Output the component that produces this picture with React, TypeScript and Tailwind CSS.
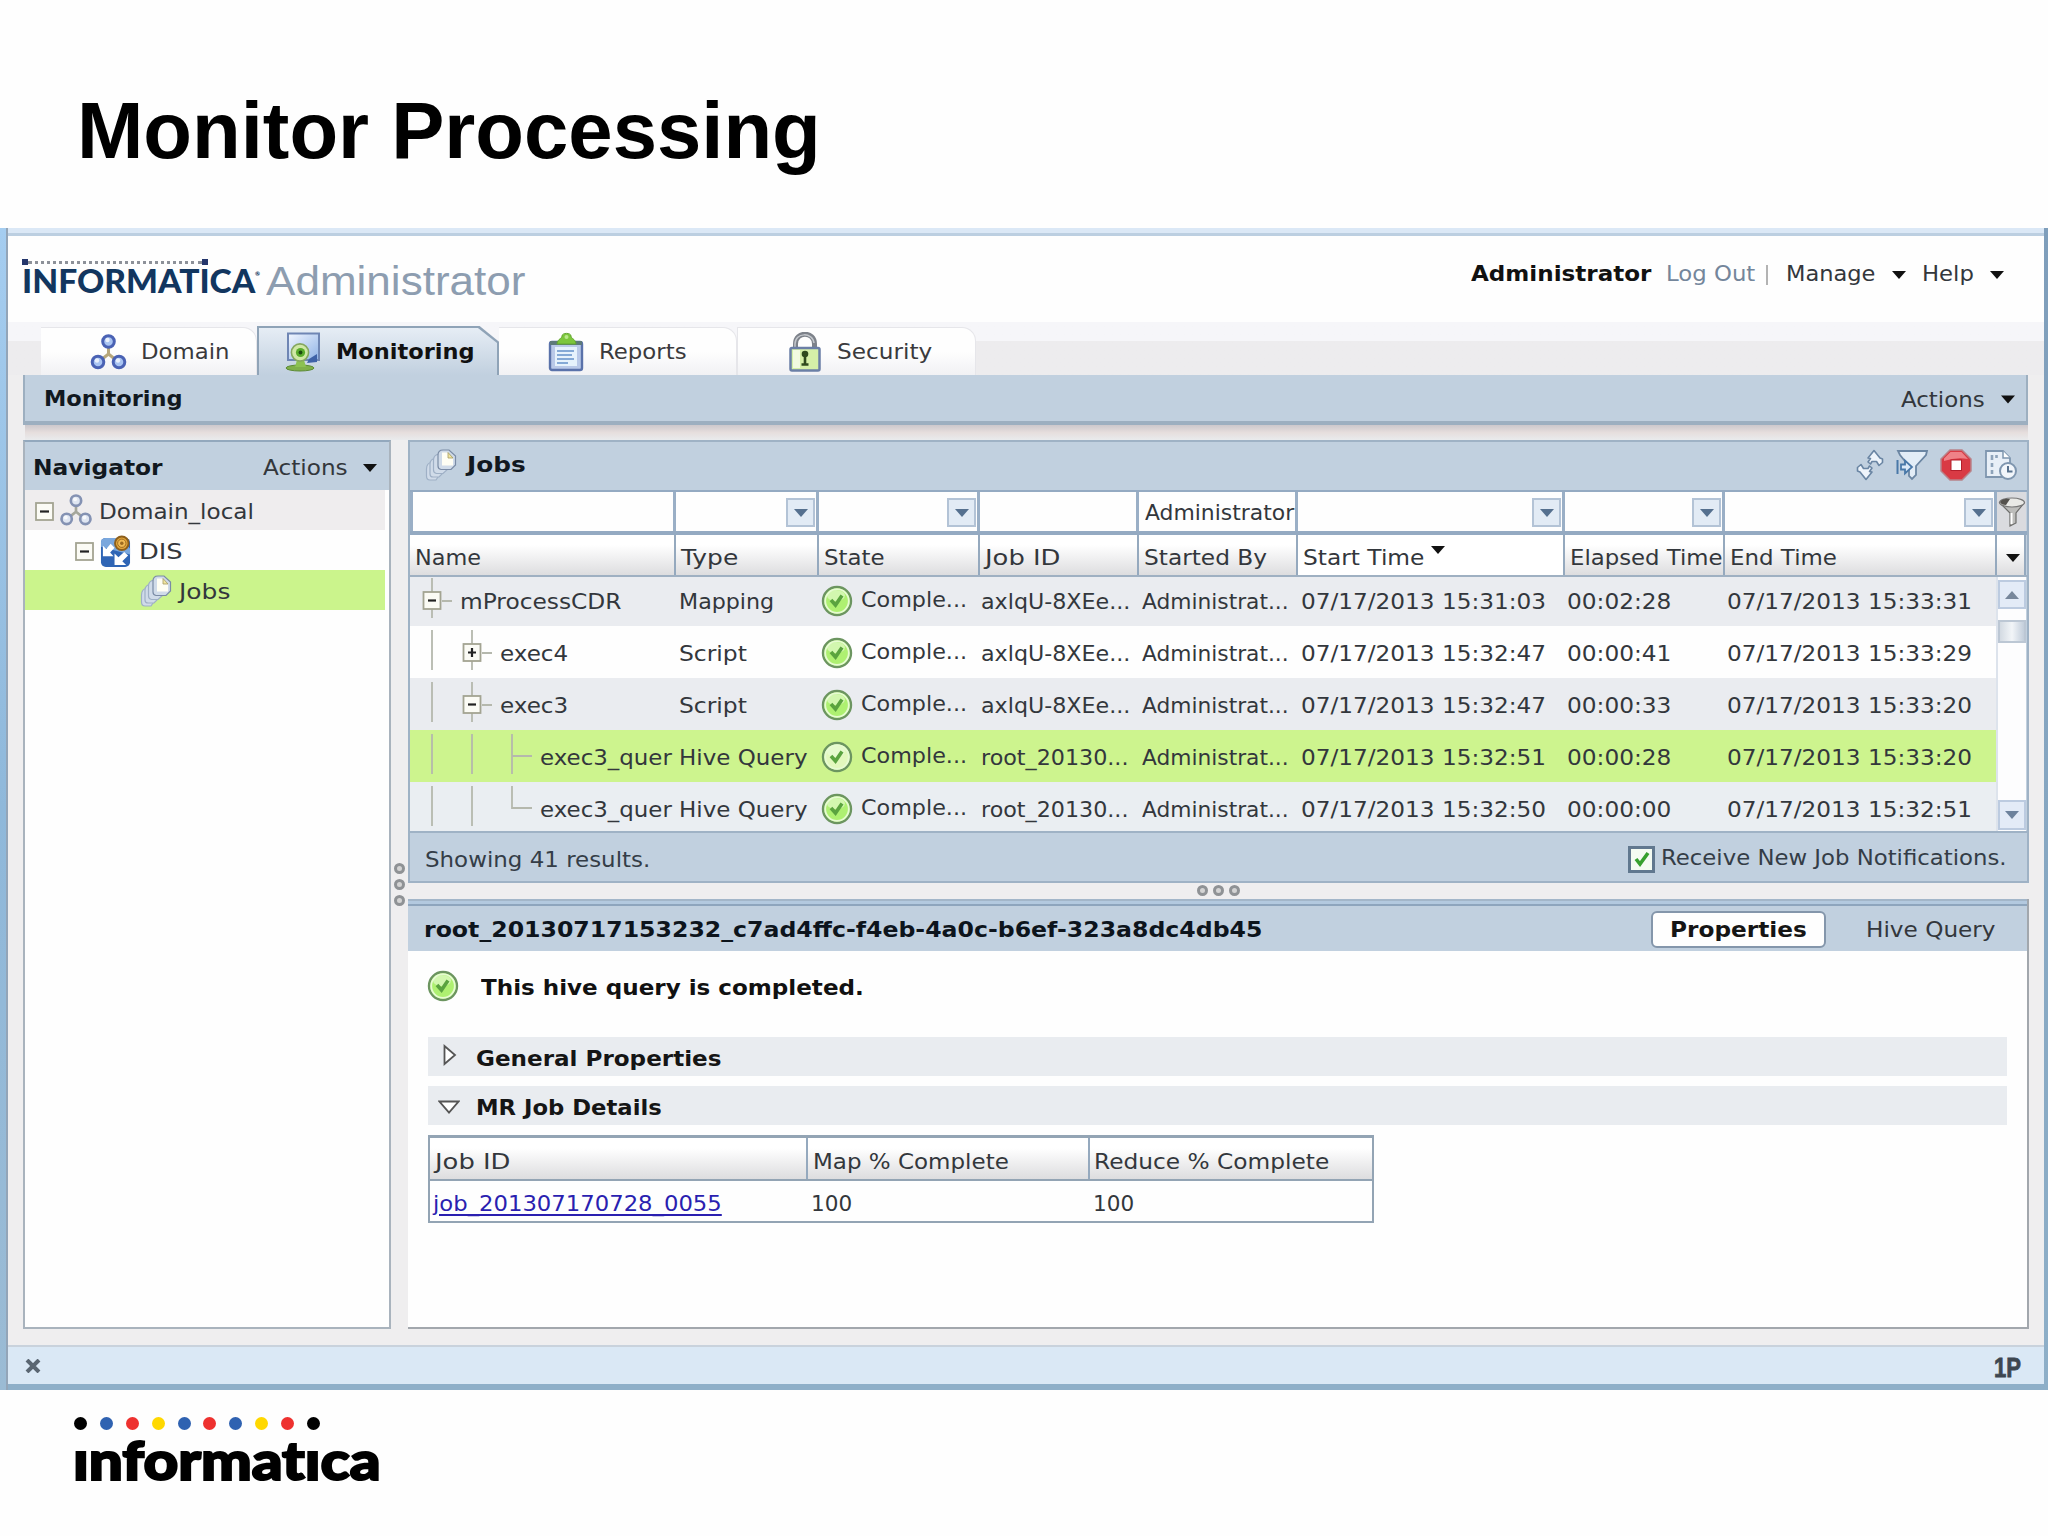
import React, { useLayoutEffect, useRef } from "react";

/** Text that is stretched horizontally to fill the width of its box. */
function Fit({ className = "", children }: { className?: string; children: React.ReactNode }) {
  const outer = useRef<HTMLSpanElement>(null);
  const inner = useRef<HTMLSpanElement>(null);
  useLayoutEffect(() => {
    const o = outer.current!;
    const i = inner.current!;
    const apply = () => {
      const natural = i.offsetWidth;
      if (natural > 0) i.style.transform = `scaleX(${(o.clientWidth - 1) / natural})`;
    };
    apply();
    const ro = new ResizeObserver(apply);
    ro.observe(o);
    ro.observe(i);
    return () => ro.disconnect();
  }, []);
  return (
    <span ref={outer} className={`flex shrink-0 whitespace-pre ${className}`}>
      <span ref={inner} className="inline-block shrink-0 origin-left">
        {children}
      </span>
    </span>
  );
}

function Down({ className = "", fill = "#111" }: { className?: string; fill?: string }) {
  return (
    <svg viewBox="0 0 14 8" className={`h-[8px] w-[14px] shrink-0 ${className}`}>
      <path d="M0 0H14L7 8Z" fill={fill} />
    </svg>
  );
}

function DomainIcon({ className = "", muted = false }: { className?: string; muted?: boolean }) {
  const s = muted ? "#8492b3" : "#4a62b4";
  const f = muted ? "#dfe6f2" : "#a9c4f2";
  return (
    <svg viewBox="0 0 36 36" className={`shrink-0 ${className}`}>
      <path d="M18 10V21M18 20L8 28M18 20L28 28" stroke={muted ? "#a5a79b" : "#b7a77c"} strokeWidth="3" fill="none" />
      {[[18, 7.5], [7.5, 28], [28.5, 28]].map(([x, y]) => (
        <g key={`${x}-${y}`}>
          <circle cx={x} cy={y} r="5.8" fill={f} stroke={s} strokeWidth="3" />
          <circle cx={x - 1} cy={y - 1.5} r="2.2" fill="#fff" opacity=".75" />
        </g>
      ))}
    </svg>
  );
}

function MonitorIcon() {
  return (
    <svg viewBox="0 0 36 40" className="h-[40px] w-[36px] shrink-0">
      <defs>
        <linearGradient id="scr" x1="0" y1="0" x2="1" y2="1">
          <stop offset="0" stopColor="#f2f7ff" />
          <stop offset="1" stopColor="#8fb2e6" />
        </linearGradient>
      </defs>
      <path d="M3 1.500H34V28H3Z" fill="url(#scr)" stroke="#6f86b4" strokeWidth="2" />
      <path d="M24 27L32 22V30L22 31Z" fill="#3f62a8" />
      <ellipse cx="15" cy="36" rx="14" ry="3" fill="#7fb04a" stroke="#5c8a35" />
      <path d="M12 28H19L21 35H10Z" fill="#8cc152" />
      <circle cx="15" cy="20.5" r="8.6" fill="#cfe8a6" stroke="#86a860" strokeWidth="1.6" />
      <circle cx="15.5" cy="20.5" r="4.6" fill="#58ab2c" />
      <circle cx="15.5" cy="20.5" r="1.9" fill="#1d4a12" />
    </svg>
  );
}

function ReportsIcon() {
  return (
    <svg viewBox="0 0 36 40" className="h-[40px] w-[36px] shrink-0">
      <rect x="2" y="10" width="32" height="28" rx="2" fill="#b9c9e8" stroke="#5a72aa" strokeWidth="2.400" />
      <rect x="2" y="9" width="32" height="4" fill="#5d7a7a" />
      <rect x="7" y="15" width="22" height="19" fill="#e6f2fc" />
      <path d="M9 19H26M9 23H24M9 27H26M9 31H20" stroke="#84a9d6" strokeWidth="2" />
      <path d="M9 12C10 6 14 7 14 4C14 .5 23 .5 23 4C23 7 27 6 28 12Z" fill="#7cc63c" stroke="#63a62f" />
      <circle cx="18.500" cy="5" r="2" fill="#b9e88a" />
    </svg>
  );
}

function LockIcon() {
  return (
    <svg viewBox="0 0 34 40" className="h-[40px] w-[34px] shrink-0">
      <path d="M7.500 18V12C7.500 -1 26.500 -1 26.500 12V18" fill="none" stroke="#7d828a" strokeWidth="5" />
      <path d="M7 17V12C7 0 25 0 26 11" fill="none" stroke="#c3c7cc" strokeWidth="1.500" />
      <rect x="2.500" y="16" width="29" height="22.500" rx="1.500" fill="#d5f0a8" stroke="#6b7fa6" strokeWidth="2.500" />
      <path d="M5 18H12V36H5Z" fill="#f2fbe0" />
      <circle cx="17" cy="22" r="3.300" fill="#2f4a1d" />
      <path d="M17 22V32M13.500 32.500H20.500" stroke="#2f4a1d" strokeWidth="2.600" />
    </svg>
  );
}

function PagesIcon({ className = "" }: { className?: string }) {
  return (
    <svg viewBox="0 0 32 32" className={`h-[32px] w-[32px] shrink-0 ${className}`}>
      <g fill="#d0dbe9" stroke="#9fb0c6" strokeWidth="1.200">
        <path d="M1.500 20Q1.500 14 7 13H15V25L11 31H5Q1.500 31 1.500 27Z" />
        <path d="M5 15Q5 10 11 9H19V23L14 28H8Q5 28 5 25Z" />
        <path d="M8.500 11Q8.500 6 14 5H23V20L18 24.500H11.500Q8.500 24 8.500 21Z" />
        <path d="M13 6Q13 1 18 1H24L30.500 7V16L26 20.500H16Q13 20 13 17Z" stroke="#7a8ba5" />
      </g>
      <path d="M17 3.500H23V9H28V16.500H17Z" fill="#fffef4" />
      <path d="M23 3.500L28 9H23Z" fill="#f3e6a0" stroke="#a39a62" strokeWidth=".8" />
    </svg>
  );
}

function ServiceIcon() {
  return (
    <svg viewBox="0 0 32 34" className="h-[33px] w-[31px] shrink-0">
      <rect x="1" y="3" width="30" height="30" rx="5" fill="#2f65b5" />
      <path d="M1 12V8Q1 3 6 3H20L31 14V20Z" fill="#7aa7dd" />
      <path d="M3 22V11L6.500 14.500L11 9L15 13L10.500 18L14 22Z" fill="#fff" />
      <path d="M15 31V19L19 23L25 17.500L29 21L23 27L27 31Z" fill="#fff" />
      <circle cx="22.500" cy="8.500" r="7" fill="#e3a63a" stroke="#8d5f1c" strokeWidth="2" />
      <circle cx="22.500" cy="8.500" r="4.300" fill="#efb954" stroke="#9c6a20" strokeWidth="1" />
      <circle cx="22.500" cy="8.500" r="1.800" fill="#9c6a20" />
    </svg>
  );
}

function CheckIcon({ pale = false, className = "" }: { pale?: boolean; className?: string }) {
  return (
    <svg viewBox="0 0 32 32" className={`h-[32px] w-[32px] shrink-0 ${className}`}>
      <circle cx="16" cy="16" r="14" fill={pale ? "#e2f8bd" : "#aef071"} stroke="#6c9560" strokeWidth="2.400" />
      <circle cx="16" cy="16" r="11.800" fill="none" stroke="#e6fbd2" strokeWidth="1.800" />
      <ellipse cx="15" cy="10.500" rx="9" ry="5.500" fill="#e9fcd8" opacity=".6" />
      <path d="M10 15L14.500 20L21 10.500" fill="none" stroke="#5aa33f" strokeWidth="3.600" />
    </svg>
  );
}

function TreeBox() {
  return (
    <svg viewBox="0 0 19 19" className="h-[19px] w-[19px] shrink-0">
      <rect x="1" y="1" width="17" height="17" fill="#fbfbf5" stroke="#a3a492" strokeWidth="1.800" />
      <path d="M5 9.500H14" stroke="#222" strokeWidth="2.200" />
    </svg>
  );
}

type Branch = "line" | "minus" | "plus" | "tee" | "end";
function Tree({ kind }: { kind: Branch }) {
  const d = {
    line: "M20 2V42",
    minus: "M20 2V42M30 25H40",
    plus: "M20 2V42M30 25H40",
    tee: "M20 2V42M20 24H40",
    end: "M20 2V24H40",
  }[kind];
  return (
    <svg viewBox="0 0 40 52" className="h-[52px] w-[40px] shrink-0">
      <path d={d} fill="none" stroke="#b5b8ad" strokeWidth="1.800" />
      {(kind === "minus" || kind === "plus") && (
        <g>
          <rect x="11.500" y="16" width="17" height="17" fill="#fbfbf5" stroke="#a3a492" strokeWidth="1.800" />
          <path d={kind === "plus" ? "M16 24.500H24M20 20V29" : "M16 24.500H24"} stroke="#222" strokeWidth="2.200" />
        </g>
      )}
    </svg>
  );
}

const COLS = "grid grid-cols-[266px_143px_161px_159px_159px_267px_160px_272px_29px]";

function FilterCell({ drop = false, className = "", children }: { drop?: boolean; className?: string; children?: React.ReactNode }) {
  return (
    <div className={`flex items-center border-r-[3px] border-[#9aafc6] bg-[#fefefe] pt-[2px] ${className}`}>
      {children}
      {drop && (
        <div className="mr-px ml-auto flex h-[29px] w-[29px] shrink-0 items-center justify-center border-2 border-[#b3c3d6] bg-[#e2ebf5]">
          <Down className="h-[7px] w-[12px]" fill="#55708f" />
        </div>
      )}
    </div>
  );
}

function HeadCell({ className = "", children }: { className?: string; children?: React.ReactNode }) {
  return (
    <div className={`flex items-center border-r-2 border-[#95a9be] bg-linear-to-b from-white from-25% to-[#dddddf] pt-[6px] pl-[5px] ${className}`}>
      {children}
    </div>
  );
}

type Row = {
  bg: string;
  tree: Branch[];
  name: string;
  nameW: string;
  type: string;
  typeW: string;
  id: string;
  idW: string;
  start: string;
  elapsed: string;
  end: string;
  selected?: boolean;
};

const rows: Row[] = [
  { bg: "bg-[#eaecf0] h-[49px]", tree: ["minus"], name: "mProcessCDR", nameW: "w-[163px]", type: "Mapping", typeW: "w-[96px]", id: "axlqU-8XEe...", idW: "w-[150px]", start: "07/17/2013 15:31:03", elapsed: "00:02:28", end: "07/17/2013 15:33:31" },
  { bg: "bg-[#fefefe] h-[52px] pt-[3px]", tree: ["line", "plus"], name: "exec4", nameW: "w-[69px]", type: "Script", typeW: "w-[69px]", id: "axlqU-8XEe...", idW: "w-[150px]", start: "07/17/2013 15:32:47", elapsed: "00:00:41", end: "07/17/2013 15:33:29" },
  { bg: "bg-[#eaecf0] h-[52px] pt-[3px]", tree: ["line", "minus"], name: "exec3", nameW: "w-[69px]", type: "Script", typeW: "w-[69px]", id: "axlqU-8XEe...", idW: "w-[150px]", start: "07/17/2013 15:32:47", elapsed: "00:00:33", end: "07/17/2013 15:33:20" },
  { bg: "bg-[#cdf48e] h-[52px] pt-[3px]", tree: ["line", "line", "tee"], name: "exec3_quer", nameW: "w-[133px]", type: "Hive Query", typeW: "w-[129px]", id: "root_20130...", idW: "w-[148px]", start: "07/17/2013 15:32:51", elapsed: "00:00:28", end: "07/17/2013 15:33:20", selected: true },
  { bg: "bg-[#eaeef2] h-[49px] pt-[3px]", tree: ["line", "line", "end"], name: "exec3_quer", nameW: "w-[133px]", type: "Hive Query", typeW: "w-[129px]", id: "root_20130...", idW: "w-[148px]", start: "07/17/2013 15:32:50", elapsed: "00:00:00", end: "07/17/2013 15:32:51" },
];

function Knobs({ vertical = false }: { vertical?: boolean }) {
  return (
    <div className={`flex items-center gap-[5px] ${vertical ? "flex-col" : ""}`}>
      {[0, 1, 2].map((i) => (
        <span key={i} className="h-[11px] w-[11px] rounded-full border-[3px] border-[#8f9295] bg-[#d4d4d4]" />
      ))}
    </div>
  );
}

function Tab({ className, children }: { className: string; children: React.ReactNode }) {
  return (
    <div className={`flex h-[48px] items-center rounded-tr-[14px] border-t border-r border-[#e6e6ea] bg-linear-to-b from-[#fefefe] from-50% to-[#f1f1f4] text-[#3a3a3d] ${className}`}>
      {children}
    </div>
  );
}

function Navigator() {
  return (
    <div className="flex h-[889px] w-[368px] flex-col border-2 border-[#a9b3bd] border-t-[#93a8bd] bg-[#fefefe]">
      <div className="flex h-[48px] items-center bg-[#c1d0df] pt-[4px] pl-[8px]">
        <Fit className="w-[131px] font-bold text-[#111820]">Navigator</Fit>
        <Fit className="ml-[99px] w-[86px]">Actions</Fit>
        <Down className="ml-[14px]" />
      </div>
      <div className="mr-[4px] flex h-[40px] items-center bg-[#efedee] pt-[2px] pl-[10px]">
        <TreeBox />
        <DomainIcon muted className="-mt-[3px] ml-[6px] h-[32px] w-[32px]" />
        <Fit className="mt-[2px] ml-[7px] w-[156px]">Domain_local</Fit>
      </div>
      <div className="flex h-[40px] items-center pt-[2px] pl-[50px]">
        <TreeBox />
        <span className="ml-[6px] flex">
          <ServiceIcon />
        </span>
        <Fit className="mt-[2px] ml-[8px] w-[45px]">DIS</Fit>
      </div>
      <div className="mr-[4px] flex h-[40px] items-center bg-[#cbf48c] pt-[2px] pl-[115px]">
        <PagesIcon />
        <Fit className="mt-[2px] ml-[7px] w-[52px]">Jobs</Fit>
      </div>
    </div>
  );
}

function JobsPanel() {
  return (
    <div className="flex h-[443px] flex-col border-2 border-[#9fb2c5] bg-[#c1d0df]">
      <div className="flex h-[48px] items-center pb-[2px] pl-[15px]">
        <PagesIcon />
        <Fit className="ml-[10px] w-[60px] font-bold text-[#111820]">Jobs</Fit>
        <div className="mr-[9px] ml-auto flex items-center">
          <svg viewBox="0 0 28 32" className="h-[32px] w-[28px]">
            <g fill="#eef4fb" stroke="#6a85a3" strokeWidth="1.600" strokeLinejoin="round">
              <path d="M12 9L18 1.500L24 9L26.500 10V13.500L23 16.500L20.500 12.500H16L14.500 15L12 13L14.500 9.500Z" />
              <path d="M16 23L10 30.500L4 23L1.500 22V18.500L5 15.500L7.500 19.500H12L13.500 17L16 19L13.500 22.500Z" />
            </g>
          </svg>
          <svg viewBox="0 0 34 32" className="ml-[11px] h-[32px] w-[34px]">
            <path d="M3 2H32L31 6L21 17V26L17 30L14 27V17L5 6Z" fill="#e3edf7" stroke="#6b86a3" strokeWidth="1.800" />
            <path d="M2.500 11V25" stroke="#4978a8" strokeWidth="2" />
            <path d="M6 15.500H10V11.500L17 18L10 24.500V20.500H6Z" fill="#dbe9f8" stroke="#4978a8" strokeWidth="1.800" />
          </svg>
          <svg viewBox="0 0 32 32" className="ml-[11px] h-[32px] w-[32px]">
            <path d="M10 1H22L31 10V22L22 31H10L1 22V10Z" fill="#d93a44" stroke="#b8838a" strokeWidth="1.500" />
            <path d="M10.500 3H21.500L28 10Q16 8 4 12V9.500Z" fill="#ef8288" />
            <rect x="11" y="11" width="10.500" height="10.500" fill="#fff" stroke="#b31f2b" />
          </svg>
          <svg viewBox="0 0 34 32" className="ml-[12px] h-[32px] w-[34px]">
            <path d="M2 2H19L26 9V28H2Z" fill="#e8eff7" stroke="#7f96af" strokeWidth="1.800" />
            <path d="M8 6V11M8 14V18M8 21V25M12.500 6V9" stroke="#8ea3ba" strokeWidth="2.600" />
            <path d="M19 2V9H26" fill="#fff" stroke="#7f96af" strokeWidth="1.500" />
            <circle cx="24" cy="22" r="8" fill="#f2f6fb" stroke="#7f96af" strokeWidth="2" />
            <path d="M24 17V22.500H28.500" fill="none" stroke="#59728e" strokeWidth="2" />
          </svg>
        </div>
      </div>

      <div className={`${COLS} h-[45px] border-t-2 border-b-4 border-[#94aac2]`}>
        <FilterCell className="border-l-[3px]" />
        <FilterCell drop />
        <FilterCell drop />
        <FilterCell />
        <FilterCell className="pl-[6px]">
          <Fit className="mt-[2px] w-[150px]">Administrator</Fit>
        </FilterCell>
        <FilterCell drop />
        <FilterCell drop />
        <FilterCell drop className="border-r-0" />
        <div className="flex items-center justify-center bg-[#dadbdf]">
          <svg viewBox="0 0 28 32" className="h-[32px] w-[28px]">
            <path d="M2 7L12 17V30L18 27V17L26 7Z" fill="#bdbdbb" stroke="#6d6d6b" strokeWidth="1.200" />
            <path d="M13.500 17V28" stroke="#fff" strokeWidth="2" />
            <ellipse cx="14" cy="6.500" rx="12.500" ry="4.500" fill="#e9e9e6" stroke="#777" strokeWidth="1.200" />
            <path d="M2 6Q5 2 12 3L8 9Q3 9 2 6Z" fill="#55524e" />
          </svg>
        </div>
      </div>

      <div className={`${COLS} h-[42px] border-b-2 border-[#9fb0c2]`}>
        <HeadCell>
          <Fit className="w-[67px]">Name</Fit>
        </HeadCell>
        <HeadCell>
          <Fit className="w-[58px]">Type</Fit>
        </HeadCell>
        <HeadCell>
          <Fit className="w-[62px]">State</Fit>
        </HeadCell>
        <HeadCell className="pl-[2px]">
          <Fit className="w-[76px]">Job ID</Fit>
        </HeadCell>
        <HeadCell>
          <Fit className="w-[124px]">Started By</Fit>
        </HeadCell>
        <HeadCell className="from-[#d9d9dc] from-0% to-white">
          <Fit className="w-[122px]">Start Time</Fit>
          <Down className="mb-4 ml-[6px]" />
        </HeadCell>
        <HeadCell className="pl-[3px]">
          <Fit className="w-[154px]">Elapsed Time</Fit>
        </HeadCell>
        <HeadCell className="pl-[4px]">
          <Fit className="w-[108px]">End Time</Fit>
        </HeadCell>
        <HeadCell className="justify-center border-r-0 pl-0">
          <Down />
        </HeadCell>
      </div>

      <div className="flex h-[254px]">
        <div className="w-[1586px]">
          {rows.map((r, i) => (
            <div key={i} className={`${COLS} overflow-hidden ${r.bg}`}>
              <div className="flex h-[50px] items-center pl-[2px]">
                {r.tree.map((k, j) => (
                  <Tree key={j} kind={k} />
                ))}
                <Fit className={`ml-[8px] ${r.nameW}`}>{r.name}</Fit>
              </div>
              <div className="flex h-[50px] items-center pl-[3px]">
                <Fit className={r.typeW}>{r.type}</Fit>
              </div>
              <div className="flex h-[50px] items-center pb-[3px] pl-[2px]">
                <CheckIcon pale={r.selected} />
                <Fit className="ml-[8px] w-[107px]">Comple...</Fit>
              </div>
              <div className="flex h-[50px] items-center pl-px">
                <Fit className={r.idW}>{r.id}</Fit>
              </div>
              <div className="flex h-[50px] items-center pl-[3px]">
                <Fit className="w-[148px]">Administrat...</Fit>
              </div>
              <div className="flex h-[50px] items-center pl-[3px]">
                <Fit className="w-[246px]">{r.start}</Fit>
              </div>
              <div className="flex h-[50px] items-center pl-[2px]">
                <Fit className="w-[105px]">{r.elapsed}</Fit>
              </div>
              <div className="flex h-[50px] items-center pl-[2px]">
                <Fit className="w-[246px]">{r.end}</Fit>
              </div>
            </div>
          ))}
        </div>
        <div className="flex w-[30px] flex-col border-l-2 border-[#dde3ec] bg-[#fdfdfe] pt-[3px]">
          <div className="flex h-[29px] items-center justify-center border-2 border-[#bccbe0] bg-[#e3ebf7]">
            <Down className="rotate-180" fill="#77879b" />
          </div>
          <div className="mt-[11px] h-[23px] border-2 border-[#bcc7d4] bg-linear-to-r from-[#d3dae2] via-[#f2f5f8] to-[#c3cedb]" />
          <div className="mt-auto mb-px flex h-[30px] items-center justify-center border-2 border-[#bccbe0] bg-[#e3ebf7]">
            <Down fill="#6d829c" />
          </div>
        </div>
      </div>

      <div className="flex flex-1 items-center border-t-2 border-[#9fb2c5] pl-[14px] text-[#343d47]">
        <Fit className="mt-[6px] ml-px w-[226px]">Showing 41 results.</Fit>
        <span className="mt-[4px] mr-[6px] ml-auto flex h-[27px] w-[27px] items-center justify-center border-[3px] border-[#61788f] bg-[#f4fbf2]">
          <svg viewBox="0 0 18 18" className="h-[18px] w-[18px]">
            <path d="M3 9L7 14L15 3" fill="none" stroke="#36a02e" strokeWidth="3.600" />
          </svg>
        </span>
        <Fit className="mt-[2px] mr-[19px] w-[347px]">Receive New Job Notifications.</Fit>
      </div>
    </div>
  );
}

function DetailPanel() {
  return (
    <div className="flex h-[430px] flex-col border-r-2 border-b-2 border-[#a2a7ad] bg-[#fefefe]">
      <div className="h-[7px] border-t-2 border-b-2 border-t-[#a3b6c9] border-b-[#8ea5bd] bg-[#b3c9df]" />
      <div className="flex h-[45px] items-center bg-[#c1d0df] pt-[2px] pl-[16px]">
        <Fit className="mt-[2px] w-[840px] font-bold text-[#0d141c]">root_20130717153232_c7ad4ffc-f4eb-4a0c-b6ef-323a8dc4db45</Fit>
        <div className="ml-[387px] flex h-[37px] w-[175px] items-center justify-center rounded-[6px] border-2 border-[#8496ab] bg-[#fefefe]">
          <Fit className="mt-[2px] w-[138px] font-bold text-[#151515]">Properties</Fit>
        </div>
        <Fit className="mt-[2px] ml-[40px] w-[130px]">Hive Query</Fit>
      </div>
      <div className="mt-[19px] flex h-[32px] items-center pl-[19px]">
        <CheckIcon />
        <Fit className="mt-[4px] ml-[22px] w-[384px] font-bold text-[#111]">This hive query is completed.</Fit>
      </div>
      <div className="mt-[35px] mr-[20px] ml-[20px] flex h-[39px] items-center bg-[#e9ecf0] pt-px pl-[15px]">
        <svg viewBox="0 0 14 22" className="mb-1 h-[22px] w-[14px]">
          <path d="M1.500 2V20L12 11Z" fill="#fff" stroke="#555" strokeWidth="1.800" />
        </svg>
        <Fit className="mt-[4px] ml-[19px] w-[247px] font-bold text-[#151515]">General Properties</Fit>
      </div>
      <div className="mt-[10px] mr-[20px] ml-[20px] flex h-[39px] items-center bg-[#e9ecf0] pt-[2px] pl-[10px]">
        <svg viewBox="0 0 22 14" className="h-[14px] w-[22px]">
          <path d="M1.500 1.500H20.500L11 12.500Z" fill="#fff" stroke="#555" strokeWidth="1.800" />
        </svg>
        <Fit className="mt-[4px] ml-[16px] w-[187px] font-bold text-[#151515]">MR Job Details</Fit>
      </div>
      <div className="mt-[10px] ml-[20px] w-[946px] border-2 border-t-[3px] border-[#93a4b4]">
        <div className="grid h-[43px] grid-cols-[378px_282px_1fr] border-b-2 border-[#93a4b4]">
          <HeadCell className="pt-[7px] pl-[4px]">
            <Fit className="w-[76px]">Job ID</Fit>
          </HeadCell>
          <HeadCell className="pt-[7px] pl-[4px]">
            <Fit className="w-[197px]">Map % Complete</Fit>
          </HeadCell>
          <div className="flex items-center bg-linear-to-b from-white from-25% to-[#dddddf] pt-[7px] pl-[4px]">
            <Fit className="w-[236px]">Reduce % Complete</Fit>
          </div>
        </div>
        <div className="grid h-[40px] grid-cols-[378px_282px_1fr] items-center pt-[6px]">
          <Fit className="ml-[3px] w-[290px] text-[#2a1fb0] underline decoration-2 underline-offset-[3px]">job_201307170728_0055</Fit>
          <Fit className="ml-[3px] w-[42px]">100</Fit>
          <Fit className="ml-[3px] w-[42px]">100</Fit>
        </div>
      </div>
    </div>
  );
}

const DOTS = ["#000", "#2f62b1", "#ee312f", "#ffd800", "#2f62b1", "#ee312f", "#2f62b1", "#ffd800", "#ee312f", "#000"];

export default function App() {
  return (
    <div className="flex h-[1536px] w-[2048px] flex-col overflow-hidden bg-[#fefefe] font-['DejaVu_Sans',Verdana,sans-serif] text-[21px] leading-none text-[#33373c]">
      <h1 className="h-[228px] pt-[91px] pl-[77px] font-['Liberation_Sans',Arial,sans-serif] text-[80px] leading-none font-bold text-black">
        <Fit className="w-[745px]">Monitor Processing</Fit>
      </h1>

      <div className="flex h-[1162px]">
        <div className="w-[8px] border-r-2 border-[#93a5b8] bg-linear-to-b from-[#a5cdf0] via-[#8fb8da] to-[#9bbbd4]" />
        <div className="flex flex-1 flex-col bg-[#efeeef]">
          <div className="h-[8px] border-b-[3px] border-[#bccfe1] bg-[#dbe8f6]" />

          <div className="flex h-[86px] bg-[#fefefe]">
            <div className="flex flex-col pt-[23px] pl-[14px]">
              <div className="flex h-[6px] w-[186px] items-center justify-between">
                <span className="h-[6px] w-[6px] bg-[#24366b]" />
                <span className="h-0 flex-1 border-t-[3px] border-dotted border-[#8d9199]" />
                <span className="h-[6px] w-[6px] bg-[#24366b]" />
              </div>
              <div className="flex font-['Lato',sans-serif] text-[32px] font-black text-[#12365f]">
                <Fit className="w-[234px]">INFORMATICA</Fit>
                <span className="mt-[6px] -ml-px text-[6px]">®</span>
              </div>
            </div>
            <div className="mt-[25px] ml-[6px] font-['Liberation_Sans',Arial,sans-serif] text-[41px] text-[#8d9db0]">
              <Fit className="w-[261px]">Administrator</Fit>
            </div>
            <div className="mr-[40px] ml-auto flex h-[77px] items-center">
              <Fit className="w-[181px] font-bold text-[#111]">Administrator</Fit>
              <Fit className="ml-[14px] w-[90px] text-[#74869b]">Log Out</Fit>
              <span className="ml-[10px] h-[20px] w-[2px] bg-[#b3b3b3]" />
              <Fit className="ml-[18px] w-[90px]">Manage</Fit>
              <Down className="ml-[16px]" />
              <Fit className="ml-[16px] w-[53px]">Help</Fit>
              <Down className="ml-[15px]" />
            </div>
          </div>

          <div className="flex h-[53px] items-end bg-linear-to-b from-[#f6f6f9] from-35% to-[#edecee] to-35% pl-[33px]">
            <Tab className="w-[216px] pl-[49px]">
              <DomainIcon className="h-[36px] w-[37px]" />
              <Fit className="mt-[2px] ml-[14px] w-[90px]">Domain</Fit>
            </Tab>
            <div className="h-[49px] w-[242px] bg-[#8fa3b7] pt-[2px] pr-[2px] pl-[2px] [clip-path:polygon(0_0,92%_0,100%_32%,100%_100%,0_100%)]">
              <div className="flex h-[47px] items-center bg-linear-to-b from-[#e6edf5] to-[#c1d0df] pl-[26px] [clip-path:polygon(0_0,92%_0,100%_32%,100%_100%,0_100%)]">
                <MonitorIcon />
                <Fit className="mt-[2px] ml-[15px] w-[139px] font-bold text-[#111]">Monitoring</Fit>
              </div>
            </div>
            <Tab className="w-[238px] pl-[49px]">
              <ReportsIcon />
              <Fit className="mt-[2px] ml-[15px] w-[89px]">Reports</Fit>
            </Tab>
            <Tab className="w-[239px] border-l pl-[50px]">
              <LockIcon />
              <Fit className="mt-[2px] ml-[15px] w-[96px]">Security</Fit>
            </Tab>
          </div>

          <div className="mr-[16px] ml-[15px] flex h-[50px] items-center border-r-2 border-b-4 border-l-2 border-[#9dafc0] bg-[#c1d0df] pl-[19px]">
            <Fit className="mt-[2px] w-[139px] font-bold text-[#111820]">Monitoring</Fit>
            <Fit className="mt-[5px] ml-auto w-[85px]">Actions</Fit>
            <Down className="mt-[2px] mr-[11px] ml-[15px] h-[9px]" />
          </div>
          <div className="mr-[16px] ml-[17px] h-[15px] bg-linear-to-b from-[#cdc8cc] via-[#e6dedd] to-[#e9ebed]" />

          <div className="flex h-[905px] pl-[15px]">
            <Navigator />
            <div className="flex w-[17px] flex-col items-center pt-[423px]">
              <Knobs vertical />
            </div>
            <div className="w-[1621px]">
              <JobsPanel />
              <div className="flex h-[16px] items-center justify-center pb-px">
                <Knobs />
              </div>
              <DetailPanel />
            </div>
          </div>

          <div className="flex h-[45px] flex-1 items-center border-t-2 border-b-[6px] border-t-[#c9d2dc] border-b-[#8eafc8] bg-[#dae8f5] pr-[22px] pl-[17px]">
            <svg viewBox="0 0 16 14" className="h-[14px] w-[16px]">
              <path d="M2 1L14 13M14 1L2 13" stroke="#5a6672" strokeWidth="4" />
            </svg>
            <span className="mt-[5px] ml-auto flex font-['Liberation_Sans',Arial,sans-serif] text-[27px] font-bold text-[#3d4650] [-webkit-text-stroke:0.8px_#3d4650]">
              <Fit className="w-[28px]">1P</Fit>
            </span>
          </div>
        </div>
        <div className="w-[4px] bg-linear-to-b from-[#7f9ebb] to-[#8eafc8]" />
      </div>

      <div className="pt-[27px] pl-[74px]">
        <div className="flex gap-[12.9px]">
          {DOTS.map((c, i) => (
            <span key={i} className="h-[13px] w-[13px] rounded-full" style={{ backgroundColor: c }} />
          ))}
        </div>
        <div className="mt-[3px] font-['Lato',sans-serif] text-[53px] leading-none font-black text-black [font-variant-ligatures:none] [-webkit-text-stroke:2px_black]">
          <Fit className="-ml-px w-[309px]">ınformatıca</Fit>
        </div>
      </div>
    </div>
  );
}
